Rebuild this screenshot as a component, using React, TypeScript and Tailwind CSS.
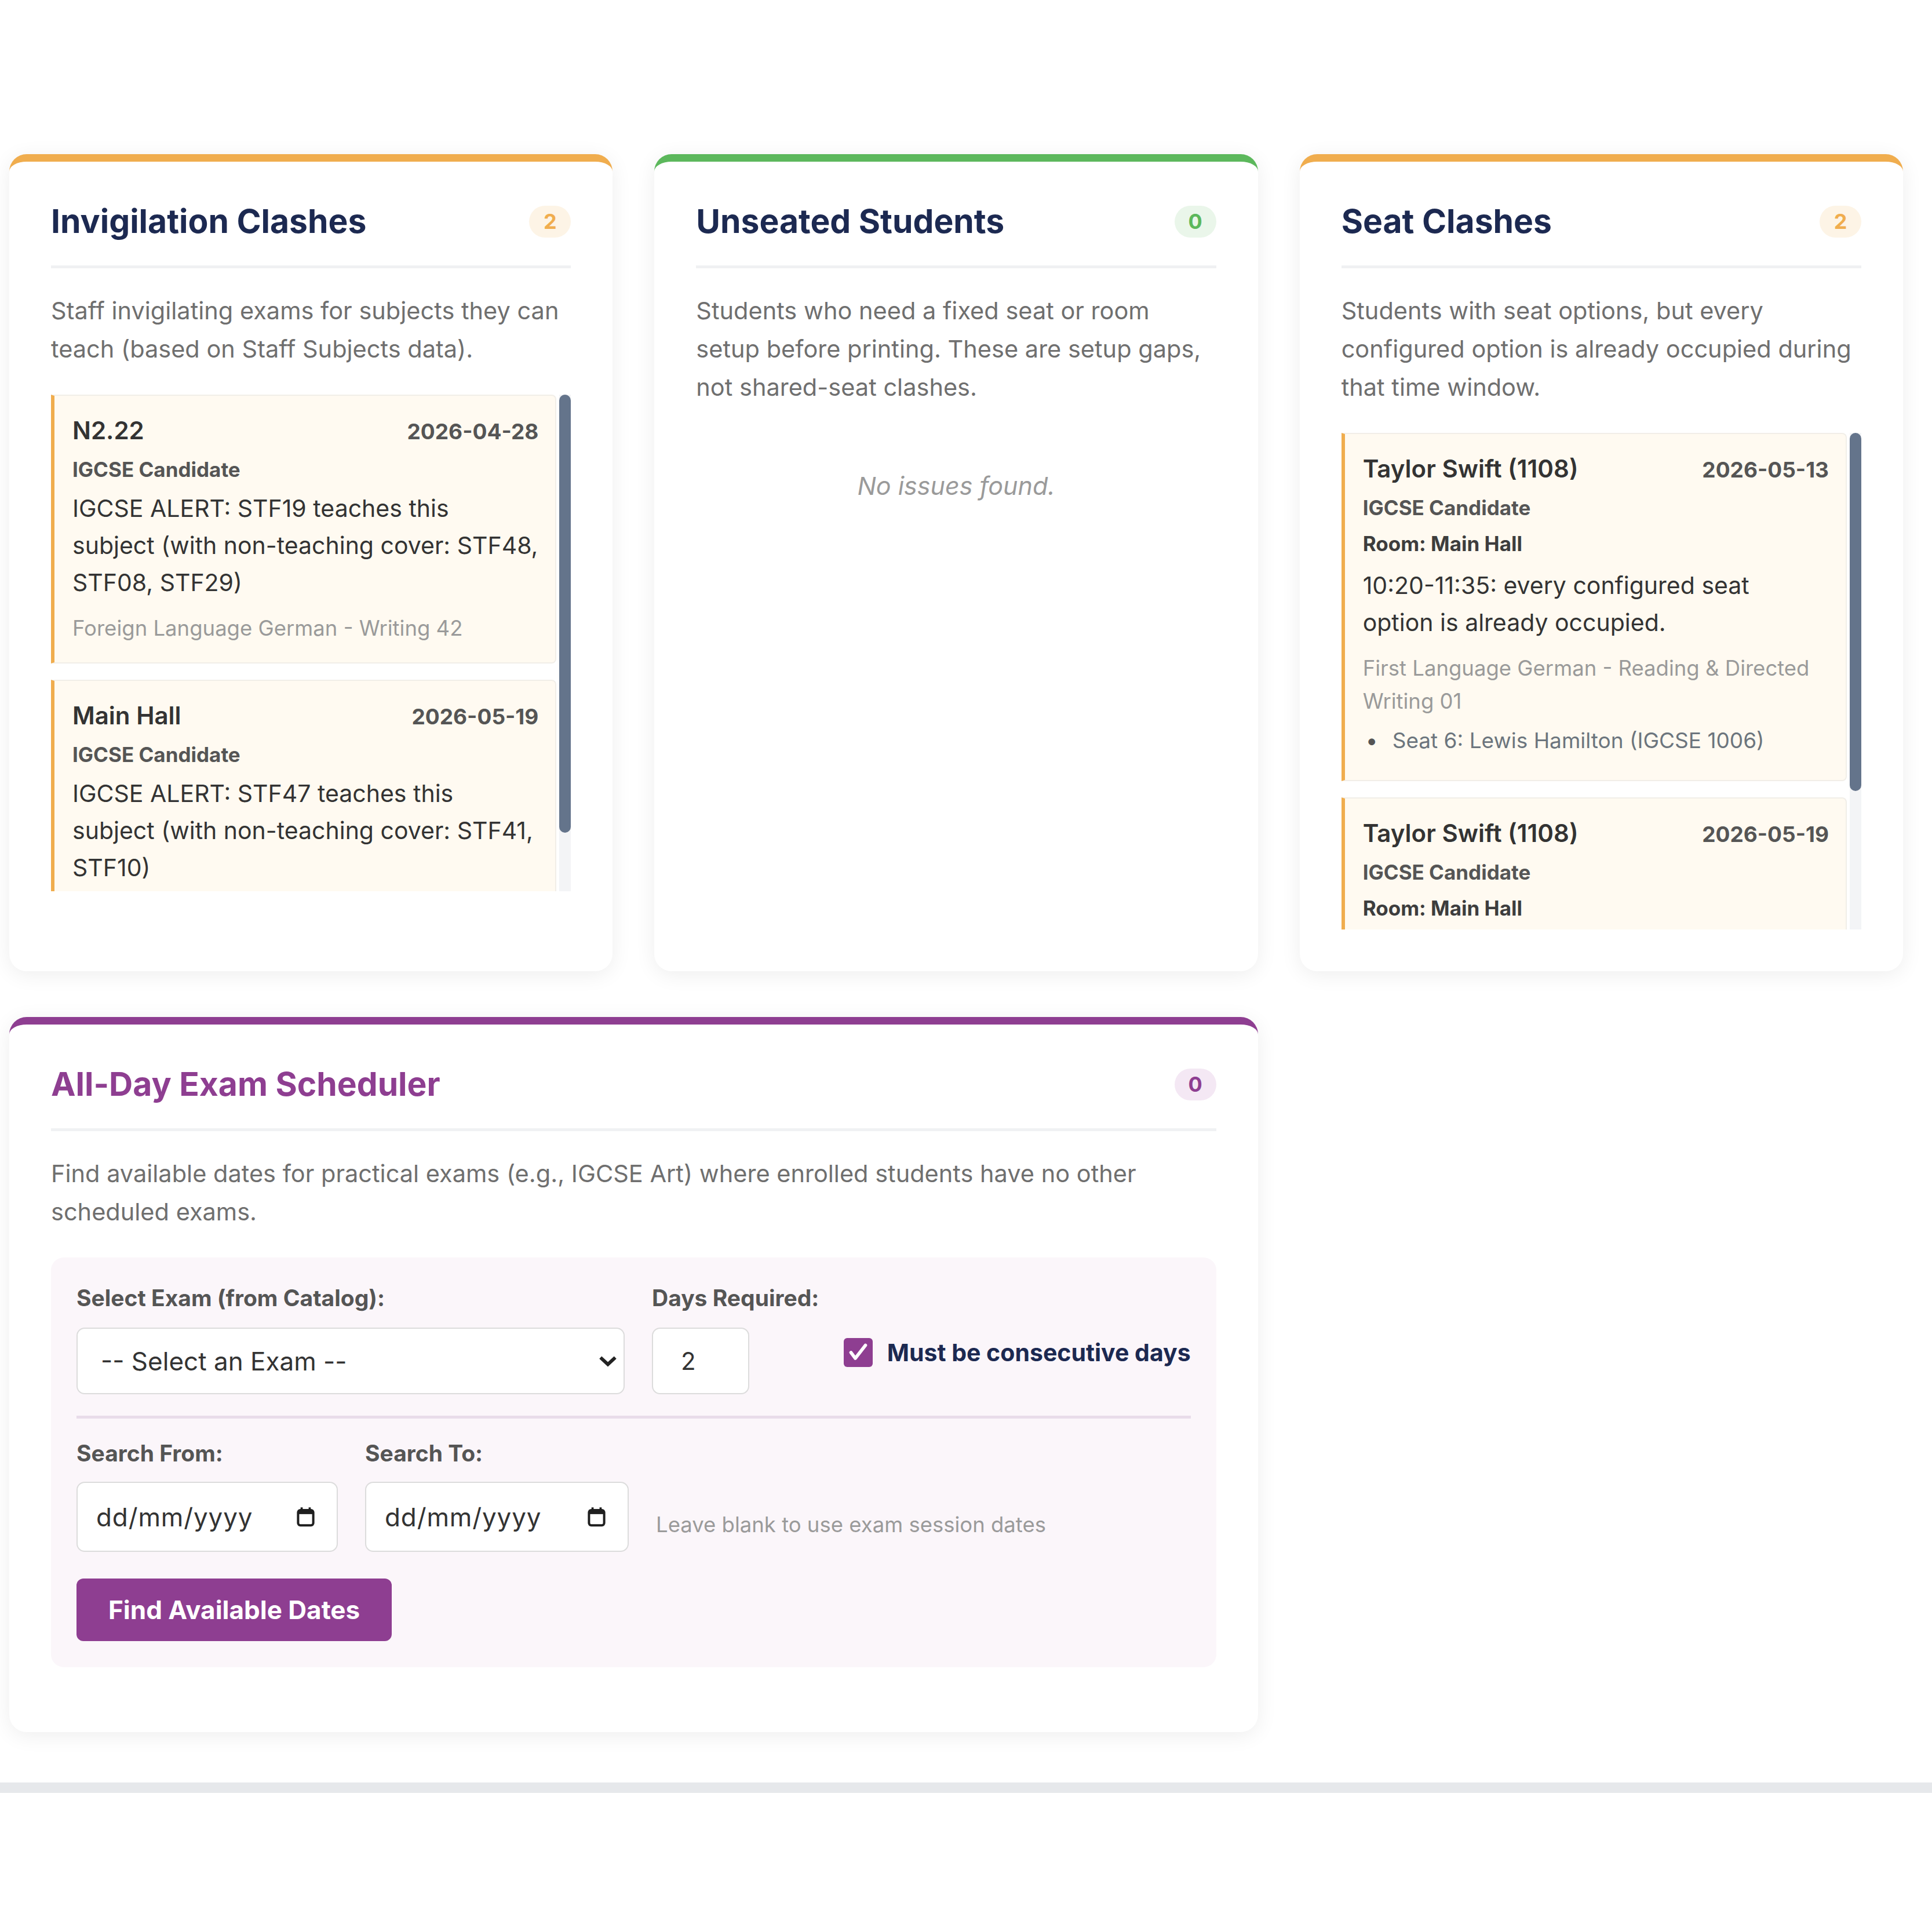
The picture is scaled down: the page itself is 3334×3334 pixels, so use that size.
import React from "react";

type Accent = "orange" | "green" | "purple";

const accents: Record<Accent, { bar: string; badge: string; title: string }> = {
  orange: {
    bar: "border-t-[#f0ad4e]",
    badge: "bg-[#fdf4e6] text-[#f0ad4e]",
    title: "text-[#1c2951]",
  },
  green: {
    bar: "border-t-[#5cb85c]",
    badge: "bg-[#eaf6ea] text-[#5cb85c]",
    title: "text-[#1c2951]",
  },
  purple: {
    bar: "border-t-[#8e3e91]",
    badge: "bg-[#f4e8f4] text-[#8e3e91]",
    title: "text-[#8e3e91]",
  },
};

function Panel({
  accent,
  title,
  count,
  description,
  className = "",
  children,
}: {
  accent: Accent;
  title: string;
  count: number;
  description: string;
  className?: string;
  children?: React.ReactNode;
}) {
  const a = accents[accent];
  return (
    <section
      className={`flex flex-col rounded-[30px] border-t-[13px] bg-white px-[72px] pt-[68px] shadow-[0_6px_36px_rgba(0,0,0,0.07)] ${a.bar} ${className}`}
    >
      <header className="flex items-center justify-between border-b-[5px] border-b-[#f0f1f3] pb-[41px]">
        <h2 className={`text-[57px] font-bold leading-[70px] ${a.title}`}>{title}</h2>
        <span
          className={`flex h-[55px] min-w-[72px] items-center justify-center rounded-full px-[22px] text-[36px] font-bold ${a.badge}`}
        >
          {count}
        </span>
      </header>
      <p className="mt-[40px] whitespace-pre-line text-[41.5px] leading-[66px] text-[#6f6f6f]">{description}</p>
      {children}
    </section>
  );
}

type Issue = {
  heading: string;
  date: string;
  tag: string;
  room?: string;
  message: string;
  detail: string;
  seats?: string[];
};

function IssueItem({ issue }: { issue: Issue }) {
  return (
    <article className="rounded-r-[8px] border-2 border-l-[6px] border-[#f1eee8] border-l-[#f0ad4e] bg-[#fffaf1] pb-[30px] pl-[31px] pr-[29px] pt-[30px]">
      <div className="flex items-baseline justify-between gap-[20px]">
        <span className="text-[42px] font-semibold leading-[60px] text-[#333]">{issue.heading}</span>
        <span className="text-[37px] font-bold text-[#555]">{issue.date}</span>
      </div>
      <div className="mt-[12px] text-[35px] font-bold leading-[51px] text-[#555]">{issue.tag}</div>
      {issue.room && (
        <div className="mt-[11px] text-[35px] font-bold leading-[51px] text-[#3d3d3d]">{issue.room}</div>
      )}
      <p
        className={`whitespace-pre text-[41px] leading-[64px] text-[#333] ${issue.room ? "mt-[14px]" : "mt-[9px]"}`}
      >
        {issue.message}
      </p>
      <p className="mt-[19px] text-[36.5px] leading-[57px] text-[#9a9a9a]">{issue.detail}</p>
      {issue.seats && (
        <ul className="mb-[10px] mt-[10px] text-[37px] leading-[57px] text-[#6c757d]">
          {issue.seats.map((s) => (
            <li key={s} className="flex">
              <span className="w-[51px] shrink-0 pl-[5px] text-[#555]">•</span>
              <span>{s}</span>
            </li>
          ))}
        </ul>
      )}
    </article>
  );
}

/* Fixed-height list with a slim slate scrollbar beside it */
function ScrollList({ thumb, children }: { thumb: string; children: React.ReactNode }) {
  return (
    <div className="mt-[46px] flex h-[857px] gap-[5px]">
      <div className="min-w-0 flex-1 space-y-[28px] overflow-hidden">{children}</div>
      <div className="w-[20px] shrink-0 bg-[#f3f4f6]">
        <div className={`w-[20px] rounded-[10px] bg-[#64748b] ${thumb}`} />
      </div>
    </div>
  );
}

const invigilation: Issue[] = [
  {
    heading: "N2.22",
    date: "2026-04-28",
    tag: "IGCSE Candidate",
    message: "IGCSE ALERT: STF19 teaches this\nsubject (with non-teaching cover: STF48,\nSTF08, STF29)",
    detail: "Foreign Language German - Writing 42",
  },
  {
    heading: "Main Hall",
    date: "2026-05-19",
    tag: "IGCSE Candidate",
    message: "IGCSE ALERT: STF47 teaches this\nsubject (with non-teaching cover: STF41,\nSTF10)",
    detail: "Foreign Language German - Listening 12",
  },
];

const seatClashes: Issue[] = [
  {
    heading: "Taylor Swift (1108)",
    date: "2026-05-13",
    tag: "IGCSE Candidate",
    room: "Room: Main Hall",
    message: "10:20-11:35: every configured seat\noption is already occupied.",
    detail: "First Language German - Reading & Directed Writing 01",
    seats: ["Seat 6: Lewis Hamilton (IGCSE 1006)"],
  },
  {
    heading: "Taylor Swift (1108)",
    date: "2026-05-19",
    tag: "IGCSE Candidate",
    room: "Room: Main Hall",
    message: "09:00-10:15: every configured seat\noption is already occupied.",
    detail: "First Language German - Listening 02",
    seats: ["Seat 6: Lewis Hamilton (IGCSE 1006)"],
  },
];

function CalendarIcon() {
  return (
    <svg viewBox="0 0 24 24" className="h-[39px] w-[37px] shrink-0" fill="none">
      <rect x="3.5" y="4.5" width="17" height="17" rx="2.5" stroke="#1f1f1f" strokeWidth="2.6" />
      <rect x="3.5" y="4.5" width="17" height="4.5" fill="#1f1f1f" />
      <path d="M7.5 1.5v4M16.5 1.5v4" stroke="#1f1f1f" strokeWidth="2.4" />
    </svg>
  );
}

function FieldLabel({ children }: { children: React.ReactNode }) {
  return <span className="text-[39px] font-bold leading-[50px] text-[#555]">{children}</span>;
}

function DateField({ label, width }: { label: string; width: string }) {
  return (
    <label className="flex flex-col">
      <FieldLabel>{label}</FieldLabel>
      <span
        className={`mt-[24px] flex h-[121px] items-center justify-between rounded-[14px] border-2 border-[#dcdcdc] bg-white pl-[32px] pr-[35px] ${width}`}
      >
        <input
          type="text"
          readOnly
          placeholder="dd/mm/yyyy"
          className="w-[300px] bg-transparent text-[44px] tracking-[0.02em] text-[#333] outline-none placeholder:text-[#333]"
        />
        <CalendarIcon />
      </span>
    </label>
  );
}

function ExamScheduler() {
  return (
    <Panel
      accent="purple"
      title="All-Day Exam Scheduler"
      count={0}
      description={"Find available dates for practical exams (e.g., IGCSE Art) where enrolled students have no other\nscheduled exams."}
      className="col-span-2 pb-[112px]"
    >
      <div className="mt-[46px] rounded-[22px] bg-[#fbf6fa] px-[44px] pb-[45px] pt-[45px]">
        <div className="flex items-end">
          <label className="flex w-[946px] flex-col">
            <FieldLabel>Select Exam (from Catalog):</FieldLabel>
            <span className="relative mt-[26px] block">
              <select
                defaultValue=""
                className="h-[115px] w-full appearance-none rounded-[14px] border-2 border-[#dcdcdc] bg-white pl-[40px] pr-[80px] text-[44px] text-[#333] outline-none"
              >
                <option value="">-- Select an Exam --</option>
              </select>
              <svg
                viewBox="0 0 36 22"
                className="pointer-events-none absolute right-[12px] top-1/2 h-[20px] w-[34px] -translate-y-1/2"
                fill="none"
              >
                <path d="M4 4 L18 17 L32 4" stroke="#222" strokeWidth="6.5" />
              </svg>
            </span>
          </label>
          <label className="ml-[47px] flex flex-col">
            <FieldLabel>Days Required:</FieldLabel>
            <input
              type="text"
              defaultValue="2"
              className="mt-[26px] h-[115px] w-[168px] rounded-[14px] border-2 border-[#dcdcdc] bg-white pl-[48px] text-[42px] text-[#333] outline-none"
            />
          </label>
          <label className="mb-[44px] ml-auto flex items-center gap-[25px]">
            <span className="flex h-[50px] w-[50px] items-center justify-center rounded-[6px] bg-[#8e3e91]">
              <svg viewBox="0 0 24 24" className="h-[40px] w-[40px]" fill="none">
                <path d="M4.5 12 L9 18 L19.5 4.5" stroke="#fff" strokeWidth="3.4" strokeLinecap="round" strokeLinejoin="round" />
              </svg>
            </span>
            <span className="text-[41px] font-bold leading-[56px] text-[#1c2951]">Must be consecutive days</span>
          </label>
        </div>

        <div className="mt-[37px] border-t-[5px] border-t-[#e9dcea]" />

        <div className="mt-[35px] flex items-end gap-[47px]">
          <DateField label="Search From:" width="w-[451px]" />
          <DateField label="Search To:" width="w-[455px]" />
          <span className="mb-[22px] text-[36.5px] leading-[50px] text-[#9a9a9a]">
            Leave blank to use exam session dates
          </span>
        </div>

        <button
          type="button"
          className="mt-[46px] h-[108px] rounded-[12px] bg-[#8e3e91] px-[55px] text-[44px] font-bold text-white"
        >
          Find Available Dates
        </button>
      </div>
    </Panel>
  );
}

export default function App() {
  return (
    <div className="min-h-[3334px] bg-white font-[family-name:Inter,'Noto_Sans',sans-serif] text-[#333]">
      <main className="ml-[16px] grid w-[3268px] grid-cols-3 gap-x-[72px] gap-y-[79px] pt-[266px]">
        <Panel
          accent="orange"
          title="Invigilation Clashes"
          count={2}
          description={"Staff invigilating exams for subjects they can\nteach (based on Staff Subjects data)."}
          className="pb-[72px]"
        >
          <ScrollList thumb="h-[756px]">
            {invigilation.map((i) => (
              <IssueItem key={i.heading + i.date} issue={i} />
            ))}
          </ScrollList>
        </Panel>

        <Panel
          accent="green"
          title="Unseated Students"
          count={0}
          description={"Students who need a fixed seat or room\nsetup before printing. These are setup gaps,\nnot shared-seat clashes."}
          className="pb-[72px]"
        >
          <p className="pt-[104px] text-center text-[43px] italic leading-[66px] text-[#9a9a9a]">No issues found.</p>
        </Panel>

        <Panel
          accent="orange"
          title="Seat Clashes"
          count={2}
          description={"Students with seat options, but every\nconfigured option is already occupied during\nthat time window."}
          className="pb-[72px]"
        >
          <ScrollList thumb="h-[618px]">
            {seatClashes.map((i) => (
              <IssueItem key={i.heading + i.date} issue={i} />
            ))}
          </ScrollList>
        </Panel>

        <ExamScheduler />
      </main>
      <footer className="mt-[87px] h-[18px] bg-[#e6e8eb]" />
    </div>
  );
}
